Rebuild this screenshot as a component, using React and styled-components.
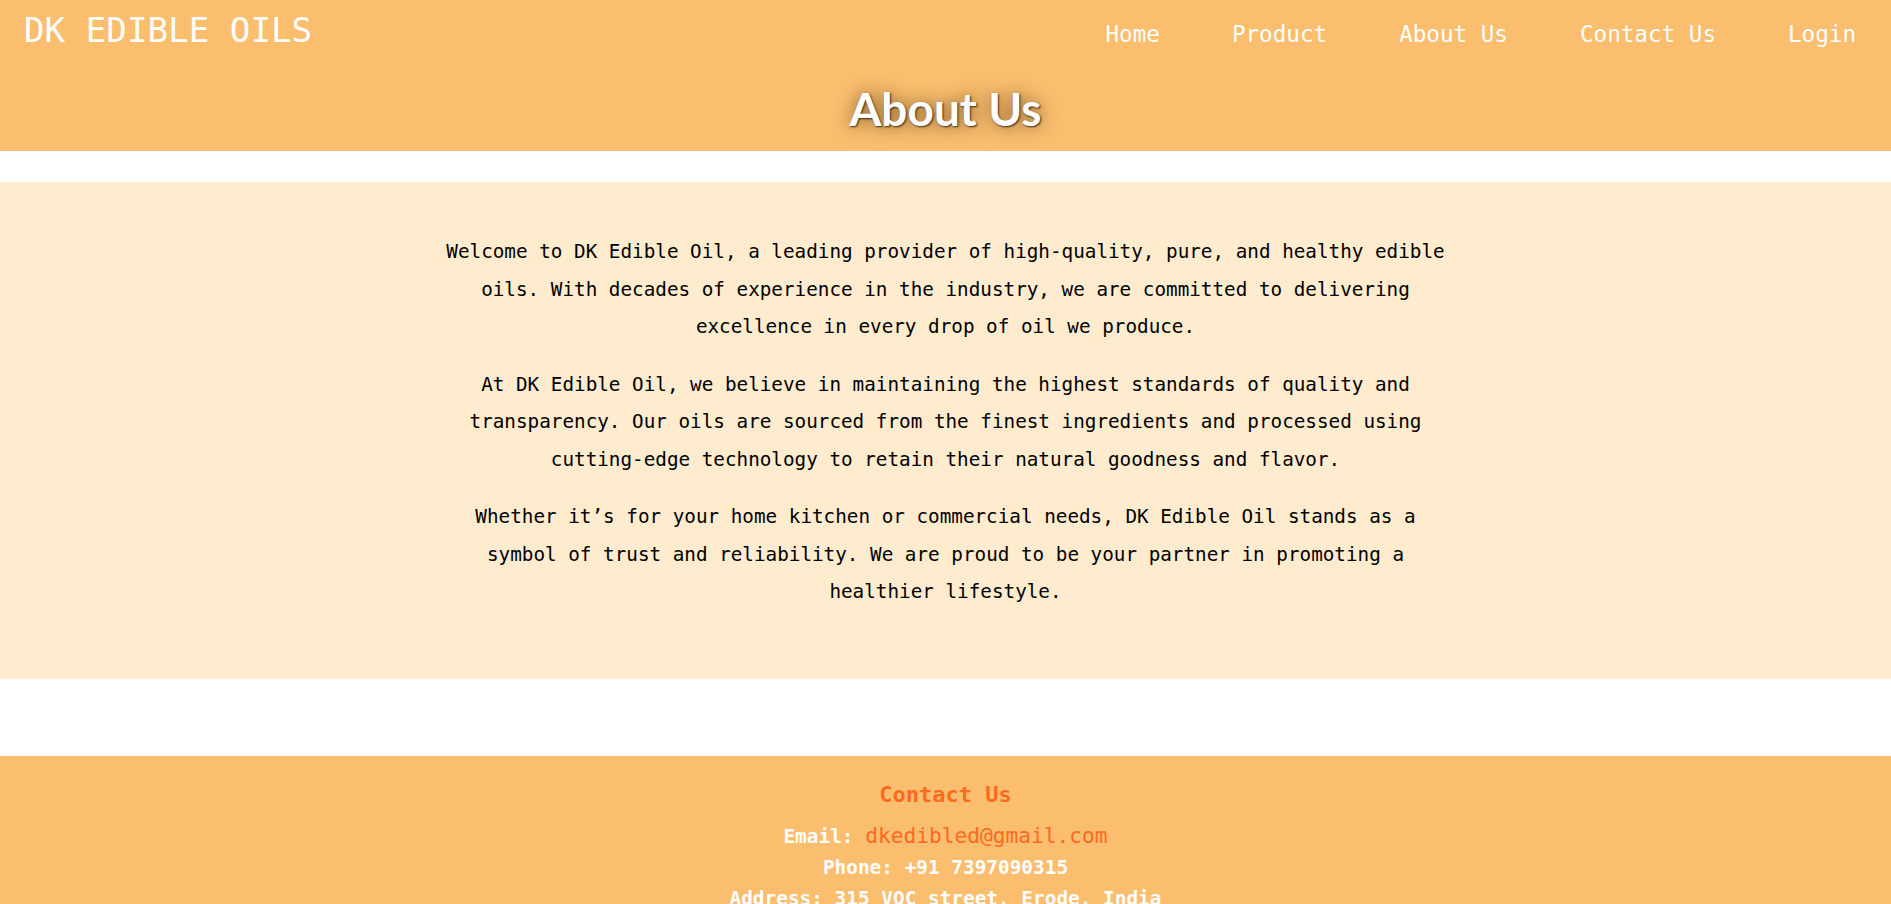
import React from "react";
import styled, { createGlobalStyle } from "styled-components";

const GlobalStyle = createGlobalStyle`
  body {
    margin: 0;
    font-family: "DejaVu Sans Mono", "Liberation Mono", monospace;
    background: #fff;
  }
`;

const Header = styled.header`
  background: #fabe6e;
  height: 151px;
  display: flex;
  flex-direction: column;
`;

const TopBar = styled.div`
  display: flex;
  justify-content: space-between;
  align-items: flex-start;
  padding: 13px 35px 0 24px;
`;

const Logo = styled.div`
  color: #fff;
  font-size: 34.2px;
  line-height: 34px;
`;

const Nav = styled.nav`
  display: flex;
  gap: 72px;
  padding-top: 8px;
`;

const NavLink = styled.a`
  color: #fff;
  font-size: 22.6px;
  line-height: 26px;
  text-decoration: none;
`;

const Title = styled.h1`
  margin: 37px 0 0;
  text-align: center;
  color: #fff;
  font-family: "Lato", "Noto Sans", sans-serif;
  font-weight: 700;
  font-size: 46px;
  line-height: 50px;
  text-shadow: 1px 1px 2px #3a2a10, 0 0 18px rgba(60, 35, 0, 0.7);
`;

const About = styled.section`
  margin-top: 31px;
  background: #ffebcd;
  padding: 51px 0 48px;
  display: flex;
  justify-content: center;
`;

const Content = styled.div`
  width: 1012px;
`;

const Para = styled.p`
  margin: 0 0 20px;
  color: #000;
  text-align: center;
  font-size: 19.3px;
  line-height: 37.5px;
`;

const Footer = styled.footer`
  margin-top: 77px;
  background: #fabe6e;
  padding: 24px 0 20px;
  display: flex;
  flex-direction: column;
  align-items: center;
  color: #fff;
  font-weight: 700;
`;

const FooterTitle = styled.h3`
  margin: 0 0 10px;
  color: #ff6a1f;
  font-size: 22px;
  line-height: 30px;
`;

const Line = styled.div`
  font-size: 19.4px;
  line-height: 31px;
`;

const Mail = styled.a`
  color: #ff6a1f;
  font-weight: 400;
  font-size: 21.2px;
  text-decoration: none;
`;

export default function App() {
  return (
    <>
      <GlobalStyle />
      <Header>
        <TopBar>
          <Logo>DK EDIBLE OILS</Logo>
          <Nav>
            {["Home", "Product", "About Us", "Contact Us", "Login"].map((l) => (
              <NavLink key={l} href="#">
                {l}
              </NavLink>
            ))}
          </Nav>
        </TopBar>
        <Title>About Us</Title>
      </Header>

      <About>
        <Content>
          <Para>
            Welcome to DK Edible Oil, a leading provider of high-quality, pure, and healthy edible
            oils. With decades of experience in the industry, we are committed to delivering
            excellence in every drop of oil we produce.
          </Para>
          <Para>
            At DK Edible Oil, we believe in maintaining the highest standards of quality and
            transparency. Our oils are sourced from the finest ingredients and processed using
            cutting-edge technology to retain their natural goodness and flavor.
          </Para>
          <Para>
            Whether it’s for your home kitchen or commercial needs, DK Edible Oil stands as a
            symbol of trust and reliability. We are proud to be your partner in promoting a
            healthier lifestyle.
          </Para>
        </Content>
      </About>

      <Footer>
        <FooterTitle>Contact Us</FooterTitle>
        <Line>
          Email: <Mail href="#">dkedibled@gmail.com</Mail>
        </Line>
        <Line>Phone: +91 7397090315</Line>
        <Line>Address: 315 VOC street, Erode, India</Line>
      </Footer>
    </>
  );
}
